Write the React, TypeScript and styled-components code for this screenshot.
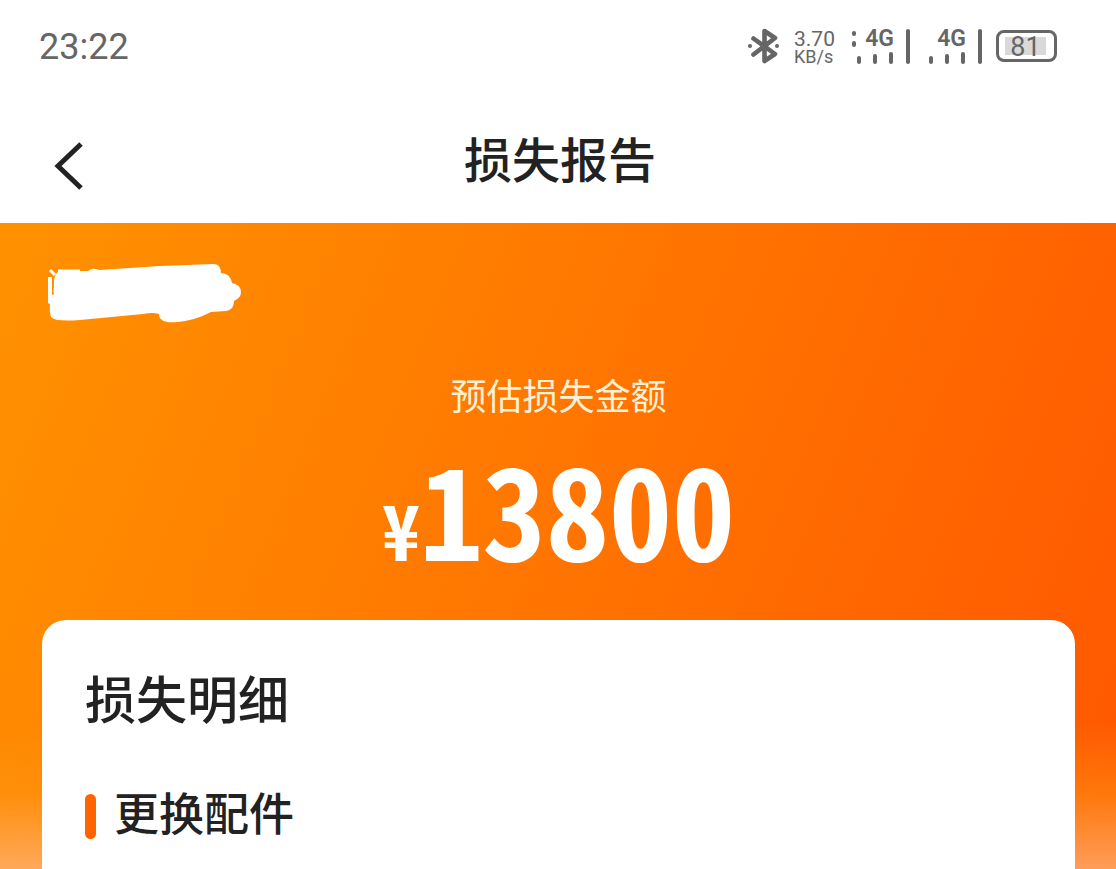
import React from "react";
import styled, { createGlobalStyle } from "styled-components";

const GlobalStyle = createGlobalStyle`
  * { box-sizing: border-box; }
  body {
    margin: 0;
    background: #fff;
    color: #222;
    font-family: Roboto, "Noto Sans CJK SC", sans-serif;
  }
`;

const Page = styled.div`
  display: flex;
  flex-direction: column;
  min-height: 100vh;
`;

const StatusBar = styled.div`
  display: flex;
  align-items: center;
  justify-content: space-between;
  height: 92px;
  padding: 0 59px 0 39px;
  color: #666;
`;

const Clock = styled.time`
  padding-top: 2px;
  font-size: 36px;
  line-height: 44px;
`;

const StatusIcons = styled.div`
  display: flex;
  align-items: center;
`;

const Speed = styled.div`
  display: flex;
  flex-direction: column;
  width: 42px;
  margin: 4px 16px 0 14px;
`;

const SpeedValue = styled.span`
  font-size: 21px;
  line-height: 18px;
`;

const SpeedUnit = styled.span`
  font-size: 18px;
  line-height: 18px;
`;

const SignalGroup = styled.div`
  display: grid;
  grid-template-columns: 54px 2px;
  margin-right: 16px;
`;

const NetworkRow = styled.div`
  display: flex;
  align-items: center;
  justify-content: flex-end;
  gap: 8px;
  height: 20px;
  padding-right: 12px;
  font-size: 23px;
  line-height: 20px;
  font-weight: 600;
`;

const SignalMast = styled.span`
  grid-column: 2;
  grid-row: 1 / span 2;
  width: 4px;
  height: 35px;
  border-radius: 2px;
  background: #666;
`;

const Battery = styled.div`
  display: flex;
  width: 61px;
  height: 32px;
  padding: 4px 6px;
  border: 3px solid #666;
  border-radius: 8px;
`;

const BatteryLevel = styled.span`
  flex: 0 0 41px;
  height: 18px;
  background: #d9d9d9;
  font-size: 27px;
  line-height: 20px;
  text-align: center;
`;

const Header = styled.header`
  display: grid;
  grid-template-columns: 120px 1fr 120px;
  align-items: center;
  height: 131px;
`;

const BackButton = styled.button`
  display: flex;
  margin: 16px 0 0 44px;
  width: 48px;
  padding: 0;
  border: 0;
  background: none;
`;

const Title = styled.h1`
  margin: 0;
  padding: 8px 0 0 4px;
  font-size: 48px;
  line-height: 64px;
  font-weight: 500;
  text-align: center;
`;

const Hero = styled.main`
  flex: 1;
  display: flex;
  flex-direction: column;
  padding: 37px 41px 0 42px;
  background:
    linear-gradient(180deg, rgba(255, 150, 20, 0) 500px, rgba(255, 150, 20, 0.5) 570px, rgba(255, 180, 120, 0.75) 646px),
    linear-gradient(112deg, #ff9200 0%, #ff7600 48%, #ff5a00 94%, #ff5600 100%);
`;

const Scribble = styled.svg`
  display: block;
  margin-left: 3px;
`;

const Estimate = styled.section`
  display: flex;
  flex-direction: column;
  align-items: center;
  padding-top: 48px;
  color: #fff;
`;

const EstimateLabel = styled.p`
  margin: 0;
  color: #fff1d6;
  font-size: 36px;
  line-height: 52px;
`;

const Amount = styled.p`
  display: flex;
  align-items: baseline;
  margin: 26px 0 0;
  font-family: "Noto Sans Mono CJK SC", "Noto Sans CJK SC", sans-serif;
  font-weight: 700;
  line-height: 112px;
`;

const Currency = styled.span`
  font-size: 76px;
`;

const Value = styled.span`
  font-size: 126px;
`;

const Card = styled.section`
  flex: 1;
  padding: 46px 43px 24px;
  margin-top: 36px;
  border-radius: 24px 24px 0 0;
  background: #fff;
`;

const CardTitle = styled.h2`
  margin: 0;
  font-size: 51px;
  line-height: 72px;
  font-weight: 500;
`;

const GroupTitle = styled.h3`
  display: flex;
  align-items: center;
  gap: 18px;
  margin: 46px 0 0;
  font-size: 45px;
  line-height: 64px;
  font-weight: 500;

  &::before {
    content: "";
    width: 11px;
    height: 45px;
    border-radius: 6px;
    background: #ff6400;
  }
`;

function Signal({ roaming }: { roaming?: boolean }) {
  return (
    <SignalGroup>
      <NetworkRow>
        {roaming && (
          <svg width="5" height="18" viewBox="0 0 5 18" aria-hidden="true">
            <path d="M2 3v1M2 13v2" stroke="#666" strokeWidth="4" strokeLinecap="round" />
          </svg>
        )}
        4G
      </NetworkRow>
      <svg width="48" height="15" viewBox="0 0 48 15" aria-hidden="true">
        <path
          d="M7 9v4M23 7v6M39 5v8"
          stroke="#666"
          strokeWidth="4"
          strokeLinecap="round"
        />
      </svg>
      <SignalMast />
    </SignalGroup>
  );
}

export default function App() {
  return (
    <Page>
      <GlobalStyle />
      <StatusBar>
        <Clock>23:22</Clock>
        <StatusIcons>
          <svg width="32" height="38" viewBox="0 0 32 38" fill="none" aria-label="蓝牙">
            <path
              d="M5.5 11.5 27 27 16.5 34V4L27 11 5.5 27.5"
              stroke="#666"
              strokeWidth="4.6"
              strokeLinecap="round"
              strokeLinejoin="round"
            />
            <circle cx="2" cy="19" r="2" fill="#666" />
            <circle cx="29" cy="19" r="2" fill="#666" />
          </svg>
          <Speed>
            <SpeedValue>3.70</SpeedValue>
            <SpeedUnit>KB/s</SpeedUnit>
          </Speed>
          <Signal roaming />
          <Signal />
          <Battery>
            <BatteryLevel>81</BatteryLevel>
          </Battery>
        </StatusIcons>
      </StatusBar>
      <Header>
        <BackButton type="button" aria-label="返回">
          <svg width="48" height="48" viewBox="0 0 48 48" fill="none">
            <path d="M37 2 14 24 37 46" stroke="#222" strokeWidth="5" />
          </svg>
        </BackButton>
        <Title>损失报告</Title>
      </Header>
      <Hero>
        <Scribble width="200" height="64" viewBox="0 0 200 64" aria-hidden="true">
          <path
            fill="#fff"
            d="M3 17H7V35L9 34Q8 31 9 26V20Q10 14 14 11H43Q48 7 54 10L115 6L168 4Q176 4 176 13Q185 13 187 23Q196 25 196 32Q196 38 189 41Q189 50 181 51L166 52Q151 60 133 62Q114 64 114 54Q108 52 98 54L35 60Q10 62 6 57Q4 51 5 44L3 43Z"
          />
          <path d="M5 10 10 15M13 11H35" stroke="#fff" strokeWidth="3" />
        </Scribble>
        <Estimate>
          <EstimateLabel>预估损失金额</EstimateLabel>
          <Amount>
            <Currency>¥</Currency>
            <Value>13800</Value>
          </Amount>
        </Estimate>
        <Card>
          <CardTitle>损失明细</CardTitle>
          <GroupTitle>更换配件</GroupTitle>
        </Card>
      </Hero>
    </Page>
  );
}
